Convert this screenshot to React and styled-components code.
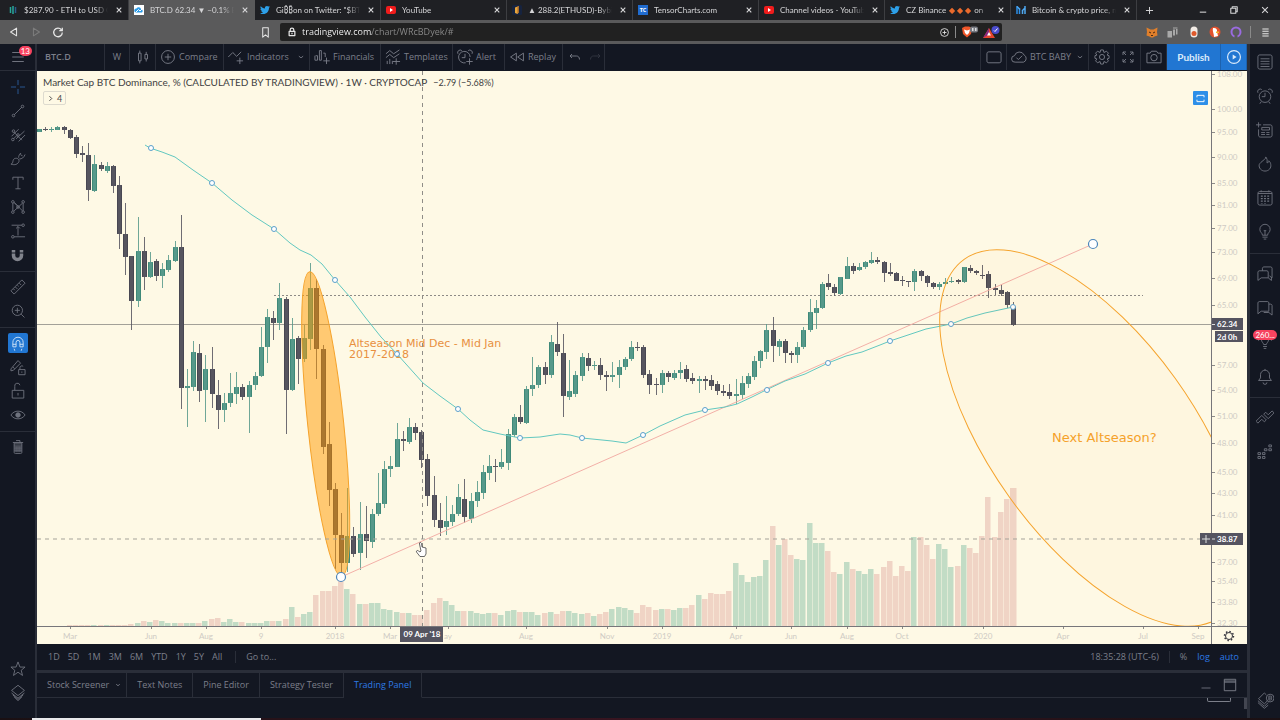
import React, { useState } from "react";
import styled, { createGlobalStyle, css } from "styled-components";
import { FaTwitter } from "react-icons/fa";

const COLORS = {
  panel: "#131722",
  line: "#2a2e39",
  icon: "#6f737e",
  text: "#7c7f8a",
  blue: "#2176d2",
  link: "#2d7ae5",
  paper: "#fef9e5",
  up: "#56998a",
  down: "#56555f",
  orange: "#f5a32c",
};

const GlobalStyle = createGlobalStyle`
  * { box-sizing: border-box; }
  body { margin: 0; background: ${COLORS.panel}; font-family: "Open Sans", "Noto Sans", sans-serif; }
  button, input { font-family: inherit; }
  button { border: 0; padding: 0; background: none; color: inherit; cursor: pointer; }
  svg { flex: none; }
`;

const Page = styled.div`
  min-height: 100vh;
  display: flex;
  flex-direction: column;
  overflow: hidden;
`;

/* browser chrome */
const TabStrip = styled.div`
  display: flex;
  height: 20px;
  padding-left: 3px;
  background: #1f2024;
  color: #d6d6d8;
`;
const BrowserTab = styled.div`
  flex: 0 1 126px;
  min-width: 0;
  display: flex;
  align-items: center;
  gap: 6px;
  padding: 0 4px 0 5px;
  background: ${({ $active }) => ($active ? "#5a5a5b" : "transparent")};
  border-right: 1px solid ${({ $active }) => ($active ? "#5a5a5b" : "#3d3e42")};
`;
const TabTitle = styled.span`
  flex: 1;
  min-width: 0;
  white-space: nowrap;
  font-family: Lato, "Noto Sans", sans-serif;
  font-size: 8px;
  line-height: 12px;
  mask-image: linear-gradient(to right, #000 85%, transparent);
`;
const Diamond = styled.span`
  margin: 0 1px;
  color: #ea6a2c;
`;
const ChromeButton = styled.button`
  display: flex;
  align-items: center;
  justify-content: center;
  width: ${({ $w }) => $w || 10}px;
  flex: none;
`;
const DimButton = styled(ChromeButton)`
  color: #7d7d7d;
`;
const FadedButton = styled(ChromeButton)`
  color: #343843;
`;
const Spacer = styled.div`
  flex: 1;
`;
const AddressRow = styled.div`
  display: flex;
  align-items: center;
  height: 24px;
  background: #5a5a5b;
  color: #e6e6e6;
`;
const AddressNav = styled.div`
  display: flex;
  gap: 2px;
  padding-left: 4px;
  width: 255px;
`;
const AddressField = styled.label`
  flex: 1;
  display: flex;
  align-items: center;
  gap: 5px;
  height: 18px;
  margin-left: 5px;
  padding: 0 2px 0 7px;
  border-radius: 2px;
  background: #212121;
`;
const AddressInput = styled.input`
  flex: 1;
  min-width: 0;
  padding: 0;
  border: 0;
  outline: 0;
  font-size: 9px;
  line-height: 14px;
  color: #e6e6e6;
  background: linear-gradient(to right, #fff 70px, #8c8c8c 70px);
  background-clip: text;
  -webkit-text-fill-color: transparent;
`;
const Extensions = styled.div`
  display: flex;
  align-items: center;
  padding-left: 139px;
  padding-right: 4px;
`;
const VRule = styled.span`
  flex: none;
  width: 1px;
  height: ${({ $h }) => $h || 12}px;
  margin: 0 ${({ $gap }) => $gap || 0}px;
  background: ${({ $color }) => $color || COLORS.line};
`;

/* trading app */
const Workspace = styled.div`
  flex: 1;
  display: flex;
  background: ${COLORS.panel};
  color: ${COLORS.text};
`;
const SideBar = styled.nav`
  flex: none;
  display: flex;
  flex-direction: column;
  align-items: center;
  color: ${COLORS.icon};
`;
const LeftBar = styled(SideBar)`
  width: 37px;
  border-right: 2px solid ${COLORS.line};
  padding-bottom: 13px;
`;
const RightBar = styled(SideBar)`
  width: 33px;
  border-left: 3px solid ${COLORS.line};
  padding: 1px 0 1px;
`;
const MenuButton = styled.button`
  position: relative;
  width: 35px;
  height: 27px;
  margin-bottom: 4px;
  border-bottom: 1px solid ${COLORS.line};
  display: flex;
  align-items: center;
  justify-content: center;
`;
const ToolButton = styled.button`
  position: relative;
  display: flex;
  align-items: center;
  justify-content: center;
  width: 20px;
  height: ${({ $h }) => $h || 24}px;
  color: ${({ $color }) => $color || "inherit"};
  ${({ $on }) =>
    $on &&
    css`
      height: 20px;
      margin: 2px 0;
      border-radius: 2px;
      background: ${COLORS.blue};
      color: #d5e6f8;
    `}
`;
const HRule = styled.span`
  flex: none;
  width: 100%;
  height: 1px;
  margin: 4px 0 3px;
  background: ${COLORS.line};
`;
const Badge = styled.span`
  position: absolute;
  top: ${({ $top }) => $top}px;
  right: ${({ $right }) => $right}px;
  padding: 0 2px;
  border-radius: 6px;
  background: #f7435f;
  color: #fff;
  font-family: Lato, sans-serif;
  font-size: 8px;
  line-height: 10px;
`;
const Main = styled.main`
  flex: 1;
  min-width: 0;
  display: flex;
  flex-direction: column;
`;
const Toolbar = styled.header`
  display: flex;
  height: 26px;
  margin-bottom: 1px;
`;
const Segment = styled.button`
  flex: none;
  display: flex;
  align-items: center;
  justify-content: ${({ $center }) => ($center ? "center" : "flex-start")};
  gap: 2px;
  width: ${({ $w }) => $w}px;
  padding-left: ${({ $center }) => ($center ? 0 : 3)}px;
  border-right: 1px solid ${COLORS.line};
  font-size: 9px;
  line-height: 14px;
  white-space: nowrap;
`;
const SymbolButton = styled(Segment)`
  padding-left: 8px;
  font-weight: 600;
`;
const Undo = styled.div`
  display: flex;
  border-right: 1px solid ${COLORS.line};
`;
const PublishButton = styled.button`
  width: ${({ $w }) => $w}px;
  display: flex;
  align-items: center;
  justify-content: center;
  background: ${COLORS.blue};
  border-right: 1px solid #1d62ae;
  color: #dcebfa;
  font-family: Lato, sans-serif;
  font-size: 10px;
  font-weight: bold;
`;
const ChevronBox = styled.span`
  margin-left: auto;
  padding-right: 2px;
  display: flex;
`;

const ChartPane = styled.section`
  position: relative;
  background: ${COLORS.paper};
`;
const ChartSvg = styled.svg`
  display: block;
  width: 100%;
  height: auto;
  font-family: Lato, sans-serif;
  font-size: 8px;
`;
const Legend = styled.div`
  position: absolute;
  top: 4px;
  left: 6px;
  color: #3f3f42;
  font-family: Lato, sans-serif;
  font-size: 10px;
  line-height: 14px;
  white-space: nowrap;
`;
const Change = styled.span`
  margin-left: 6px;
  font-size: 9px;
`;
const CollapseButton = styled.button`
  display: flex;
  align-items: center;
  gap: 3px;
  height: 14px;
  margin-top: 1px;
  padding: 0 3px;
  border: 1px solid #dedbcf;
  border-radius: 2px;
  color: #4a4a4c;
  font-size: 9px;
`;
const FitButton = styled.button`
  position: absolute;
  top: 20px;
  right: 39px;
  width: 15px;
  height: 14px;
  display: flex;
  align-items: center;
  justify-content: center;
  border-radius: 1px;
  background: #2d8fe8;
  color: #fff;
`;
const BottomBar = styled.div`
  display: flex;
  align-items: center;
  gap: 10px;
  height: 26px;
  padding: 0 8px 0 11px;
`;
const RangeGroup = styled.div`
  display: flex;
  gap: 8px;
  padding-right: 3px;
`;
const TextButton = styled.button`
  font-size: 9px;
  line-height: 14px;
  color: ${({ $on }) => ($on ? COLORS.link : "inherit")};
`;
const PanelTabs = styled.div`
  display: flex;
  height: 28px;
  border-top: 3px solid ${COLORS.line};
`;
const PanelTab = styled.button`
  display: flex;
  align-items: center;
  gap: 4px;
  padding: 0 ${({ $menu }) => ($menu ? 3 : 10)}px 0 10px;
  border-right: 1px solid ${COLORS.line};
  border-bottom: 1px solid ${({ $on }) => ($on ? "transparent" : COLORS.line)};
  color: ${({ $on }) => ($on ? COLORS.link : "inherit")};
  font-size: 9px;
  line-height: 14px;
`;
const PanelActions = styled.div`
  flex: 1;
  display: flex;
  align-items: center;
  justify-content: flex-end;
  gap: 6px;
  padding-right: 8px;
  border-bottom: 1px solid ${COLORS.line};
`;
const PanelBody = styled.div`
  display: flex;
  justify-content: flex-end;
  gap: 13px;
  height: 20px;
`;
const PeekButton = styled.span`
  width: 24px;
  height: 4px;
  border: 1px solid ${COLORS.text};
  border-top: 0;
  border-radius: 0 0 2px 2px;
`;
const PeekScroll = styled.span`
  width: 3px;
  height: 11px;
  background: #434651;
`;
const TaskStrip = styled.footer`
  height: 2px;
  padding-left: 32px;
  background: linear-gradient(to right, #1a1013 0%, #3c1522 55%, #1a1013 100%);
`;
const TaskActive = styled.div`
  width: 229px;
  height: 2px;
  background: #e9e9ec;
`;

/* 28-unit line icons */
const ICONS = {
  menu: "M5 7H23M5 14H23M5 21H23",
  cross: "M14 3V11M14 17V25M3 14H11M17 14H25",
  trend: "M8 20L20 8M5 21a2 2 0 1 0 4 0a2 2 0 1 0-4 0M19 7a2 2 0 1 0 4 0a2 2 0 1 0-4 0",
  fork: "M4 16L15 5M11 20L24 8M15 24L25 14M7 9L20 22M4 21a2 2 0 1 0 4 0a2 2 0 1 0-4 0M12 14a2 2 0 1 0 4 0a2 2 0 1 0-4 0M5 8a2 2 0 1 0 4 0a2 2 0 1 0-4 0M7 20L12 15",
  brush: "M3 22c5-1 1-8 7-9c4-1 7 3 5 6c-3 5-9 4-12 3zM15 12c0-3 1-5 3-7M16 14c4 0 7-2 9-7M18 5c0 3 1 4 3 4",
  text: "M6 9V5H22V9M14 5V23M10 23H18",
  pattern:
    "M6 8V20M8 7L21 20M8 20L21 8M22 8V20M8 7L13 12M4 6a2 2 0 1 0 4 0a2 2 0 1 0-4 0M4 22a2 2 0 1 0 4 0a2 2 0 1 0-4 0M20 6a2 2 0 1 0 4 0a2 2 0 1 0-4 0M20 22a2 2 0 1 0 4 0a2 2 0 1 0-4 0M12 14a2 2 0 1 0 4 0a2 2 0 1 0-4 0",
  position: "M4 5H20M14 7V21M11 10L14 7L17 10M8 23H25M20 5a2 2 0 1 0 4 0a2 2 0 1 0-4 0M4 23a2 2 0 1 0 4 0a2 2 0 1 0-4 0",
  ruler: "M3 20L20 3L25 8L8 25zM7 17L9 19M10 14L13 17M13 11L15 13M16 8L19 11",
  zoom: "M5 13a8 8 0 1 0 16 0a8 8 0 1 0-16 0M19 19L24 24M13 9V17M9 13H17",
  magnet: "M6 20V13a8 8 0 0 1 16 0V20H17V13a3 3 0 0 0-6 0V20zM6 16H11M17 16H22M8 23L9 26M20 23L19 26",
  pencilLock: "M3 17L14 4L18 8L7 19L3 20zM6 14L9 17M15 18H25V26H15zM17 18V15a3 3 0 0 1 5-2M20 21V23",
  lock: "M5 13H23V25H5zM9 13V7a4 4 0 0 1 8-2M14 17V21",
  trash: "M8 8H20V22c0 2-1 2-2 2H10c-1 0-2 0-2-2zM6 7H22M11 4H17V7M8 11H20M11 13V22M14 13V22M17 13V22M8 14H20M8 17H20M8 20H20",
  star: "M14 3L17 11H25L19 16L21 24L14 19L7 24L9 16L3 11H11z",
  layers: "M14 2L24 10L14 18L4 10zM4 14L14 22L24 14M6 17L14 24L22 17M8 20L14 26L20 20",
  candles: "M7 8H11V20H7zM9 4V8M9 20V24M17 10H21V17H17zM19 6V10M19 17V21",
  compare: "M4 14a10 10 0 1 0 20 0a10 10 0 1 0-20 0M14 9V19M9 14H19",
  indicators: "M2 14L9 7L15 13L22 6M20 15V25M15 20H25",
  financials: "M3 12V19M7 12V19M4 12H7M10 4H13V19H10zM16 8H19V14M21 15V25M16 20H26M3 19H7",
  templates: "M3 9L9 4L15 9L24 3M3 15L9 10L15 15L24 9M5 20V25M9 17V25M13 20V25M19 16V26M14 21H25",
  alarm: "M15 23A9 9 0 1 1 22 14M3 9A4 4 0 0 1 9 4M19 4A4 4 0 0 1 25 9M14 9V15H9M21 16V26M16 21H26",
  replay: "M13 8V20L4 14zM24 8V20L15 14z",
  undo: "M8 8L4 12L8 16M4 12H17c3 0 6 2 6 7",
  redo: "M20 8L24 12L20 16M24 12H11c-3 0-6 2-6 7",
  square: "M6 6H22c2 0 3 1 3 3V20c0 2-1 3-3 3H6c-2 0-3-1-3-3V9c0-2 1-3 3-3z",
  cloud: "M8 22a5 5 0 0 1-1-10a8 8 0 0 1 15-1a6 6 0 0 1-1 11zM10 15L13 18L19 12",
  gear: "M14 10a4 4 0 1 0 0 8a4 4 0 1 0 0-8M12 3H16L17 7L21 5L24 8L22 11L25 12V16L22 17L24 20L21 23L17 21L16 25H12L11 21L7 23L4 20L6 17L3 16V12L6 11L4 8L7 5L11 7z",
  full: "M4 10V4H10M4 4L10 10M18 4H24V10M24 4L18 10M4 18V24H10M4 24L10 18M24 18V24H18M24 24L18 18",
  camera: "M3 8H8L10 5H18L20 8H25V23H3zM9 15a5 5 0 1 0 10 0a5 5 0 1 0-10 0",
  play: "M4 14a10 10 0 1 0 20 0a10 10 0 1 0-20 0",
  list: "M6 3H22c2 0 3 1 3 3V22c0 2-1 3-3 3H6c-2 0-3-1-3-3V6c0-2 1-3 3-3zM7 9H21M7 13H21M7 17H21M7 21H21",
  clock: "M5 15a9 9 0 1 0 18 0a9 9 0 1 0-18 0M3 9A4 4 0 0 1 9 4M19 4A4 4 0 0 1 25 9M14 9V15H9M8 23L6 26M20 23L22 26",
  news: "M11 6H22c2 0 3 1 3 3V22c0 2-1 3-3 3H7c-2 0-3-1-3-3V13M9 10H21V14H9zM8 18H14M8 21H14M16 18H21M16 21H21M4 2V10M0 6H8",
  fire: "M15 3c1 4-8 7-10 12c-1 5 3 10 9 10s10-5 9-10c0-3-2-5-3-6c0 2-1 3-3 3c1-4 0-7-2-9z",
  calendar: "M6 4H22c2 0 3 1 3 3V22c0 2-1 3-3 3H6c-2 0-3-1-3-3V7c0-2 1-3 3-3zM8 2V5M20 2V5M3 7H25",
  calendarDots: "M9 10V23M14 10V23M19 10V20",
  bulb: "M10 19c0-4-4-4-4-9a8 8 0 0 1 16 0c0 5-4 5-4 9zM10 22H18M12 25H16M14 19V12M12 12H16",
  chats: "M10 9V5c0-1 1-2 2-2H23c1 0 2 1 2 2V20L21 17M3 11c0-1 1-2 2-2H17c1 0 2 1 2 2V20H8L3 24zM19 20L24 24V19",
  chat: "M5 4H18c1 0 2 1 2 2V19H8L3 23V6c0-1 1-2 2-2zM20 8H23c1 0 2 1 2 2V25L20 21H12",
  idea: "M9 6c-2 8 2 8 3 12H16c1-4 5-4 3-12M11 21H17M12 24H16M4 8V12M1 5V9M24 8V12M27 5V9",
  bell: "M4 21H24L21 17V12a7 7 0 0 0-14 0V17zM14 5V3M11 24a3 3 0 0 0 6 0",
  zig: "M0 19L9 10L16 17L13 20L9 16L3 22zM12 8L19 15L28 6L25 3L19 9L15 5z",
  dots: "M3 15H7V18H3zM3 21H7V24H3zM10 15H14V18H10zM10 21H14V24H10zM13 9H17V12H13zM20 3H24V6H20zM20 9H24V12H20z",
  stackB: "M13 3L4 12L13 20L18 15M3 15L13 24L19 18M3 18L13 27L19 22M13 3L16 6M16 11a6 6 0 1 0 12 0a6 6 0 1 0-12 0M20 8V14H23c2 0 2-3 0-3c2 0 2-3 0-3zM20 11H23",
  eye: "M3 14c5-8 17-8 22 0c-5 8-17 8-22 0z",
  window: "M4 4H24V24H4zM4 9H24M4 7H24",
  minus: "M5 20H23",
  chevron: "M9 12L14 16L19 12",
  right: "M10 5L19 14L10 23",
  close: "M6 6L22 22M22 6L6 22",
  plus: "M14 3V25M3 14H25",
  fit: "M5 11V6H23V11M5 17V22H23V17",
  restore: "M5 9H19V23H5zM9 9V5H23V19H19",
  back: "M20 5V23L6 14z",
  forward: "M8 5V23L22 14z",
  reload: "M22 9A10 10 0 1 0 24 15M24 4V11H17",
  bookmark: "M8 4H20V24L14 19L8 24z",
  menuSmall: "M6 5H22M6 11H22M6 17H22M6 23H22",
  padlock: "M6 12H22V24H6zM9 12V8a5 5 0 0 1 10 0V12M14 16V20",
};

const Icon = ({ name, size = 18, weight = 1.4, children }) => (
  <svg
    width={size}
    height={size}
    viewBox="0 0 28 28"
    fill="none"
    stroke="currentColor"
    strokeWidth={weight}
    strokeLinejoin="round"
    aria-hidden="true"
  >
    <path d={ICONS[name]} />
    {children}
  </svg>
);

const Favicon = ({ kind }) => {
  if (kind === "twitter") return <FaTwitter size={10} color="#2d9fe8" />;
  return (
    <svg width="10" height="10" viewBox="0 0 20 20" aria-hidden="true">
      {kind === "eth" && (
        <g strokeWidth="3">
          <path d="M5 4V16M10 2V18" stroke="#27a79a" />
          <path d="M15 4V16" stroke="#2b5d8c" />
        </g>
      )}
      {kind === "tv" && (
        <g>
          <rect width="20" height="20" fill="#fff" />
          <path d="M4 15a4 4 0 0 1 1-8a5 5 0 0 1 9 1a4 4 0 0 1 2 7z" fill="#2e9be6" />
          <path d="M4 14L9 9L12 12L16 8" stroke="#fff" strokeWidth="2" fill="none" />
        </g>
      )}
      {kind === "youtube" && (
        <g>
          <rect y="2" width="20" height="16" rx="4" fill="#f01c1c" />
          <path d="M8 6V14L14 10z" fill="#fff" />
        </g>
      )}
      {kind === "bybit" && (
        <g>
          <rect width="20" height="20" rx="3" fill="#16233f" />
          <path d="M6 5L14 2V14L11 18L6 16z" fill="#e8a63c" />
          <path d="M11 3L14 2V14L11 18z" fill="#a8692a" />
        </g>
      )}
      {kind === "tensor" && (
        <g>
          <rect width="20" height="20" fill="#1f6bd0" />
          <text x="10" y="14" fill="#fff" fontSize="11" fontWeight="bold" textAnchor="middle">
            TC
          </text>
        </g>
      )}
      {kind === "market" && (
        <g strokeWidth="3" fill="none">
          <path d="M2 2V18M7 7V18" stroke="#2d8fe8" />
          <path d="M13 11V18M18 2V18M2 3L8 9M12 12L18 6" stroke="#4fa8f0" />
        </g>
      )}
    </svg>
  );
};

const BROWSER_TABS = [
  ["eth", "$287.90 - ETH to USD Co"],
  ["tv", "BTC.D 62.34 ▼ −0.1% BT"],
  ["twitter", 'Gi₿₿on on Twitter: "$BTC'],
  ["youtube", "YouTube"],
  ["bybit", "▲ 288.2(ETHUSD)-Bybit"],
  ["tensor", "TensorCharts.com"],
  ["youtube", "Channel videos - YouTub"],
  ["twitter", "CZ Binance ◆◆◆ on"],
  ["market", "Bitcoin & crypto price, m"],
];

// dir, high, body top, body bottom, low, volume
const CANDLES = [
  [1, 129, 129, 132, 132, 0], [0, 127, 129, 130, 131, 0], [1, 127, 129, 130, 132, 0], [1, 126, 127, 130, 130, 0],
  [0, 126, 127, 130, 134, 0], [0, 129, 130, 138, 139, 1], [0, 135, 137, 154, 158, 1], [0, 146, 153, 155, 162, 1],
  [0, 143, 155, 190, 201, 1], [1, 155, 164, 191, 192, 1], [0, 162, 165, 169, 171, 1], [1, 162, 166, 171, 173, 1],
  [0, 165, 166, 186, 193, 1], [0, 176, 185, 234, 249, 1], [0, 203, 234, 257, 275, 1], [0, 256, 256, 301, 330, 2],
  [1, 217, 251, 301, 307, 3], [0, 237, 251, 277, 290, 5], [1, 252, 262, 277, 278, 4], [0, 259, 261, 276, 281, 6],
  [1, 263, 269, 276, 288, 5], [1, 255, 260, 270, 272, 3], [1, 241, 247, 261, 262, 3], [0, 215, 247, 388, 409, 3],
  [1, 369, 386, 388, 427, 3], [1, 341, 352, 387, 391, 3], [0, 344, 353, 391, 402, 3], [1, 355, 369, 390, 422, 5],
  [0, 347, 369, 394, 408, 7], [0, 380, 395, 410, 429, 8], [1, 393, 403, 410, 422, 4], [1, 373, 393, 403, 407, 7],
  [1, 372, 387, 394, 404, 4], [0, 384, 387, 397, 400, 4], [1, 381, 385, 397, 433, 3], [1, 372, 376, 385, 390, 3],
  [1, 327, 347, 376, 377, 3], [1, 309, 317, 347, 363, 5], [0, 311, 318, 323, 340, 5], [1, 283, 298, 323, 330, 5],
  [0, 297, 299, 390, 434, 7], [1, 318, 339, 390, 391, 19], [0, 336, 338, 359, 384, 9], [1, 325, 338, 359, 362, 12],
  [1, 263, 288, 339, 350, 14], [0, 279, 288, 349, 379, 31], [0, 345, 349, 447, 454, 35], [0, 422, 444, 490, 506, 35],
  [0, 483, 489, 535, 569, 40], [0, 513, 535, 563, 573, 45], [1, 488, 536, 563, 572, 37], [0, 527, 536, 554, 557, 32],
  [1, 502, 534, 553, 570, 22], [0, 506, 534, 541, 558, 22], [1, 509, 514, 542, 548, 23], [1, 473, 503, 514, 516, 23],
  [1, 461, 469, 504, 508, 17], [1, 456, 466, 469, 477, 16], [1, 423, 439, 467, 467, 14], [0, 431, 439, 441, 451, 13],
  [1, 418, 427, 442, 444, 13], [0, 423, 427, 433, 440, 11], [0, 430, 432, 460, 468, 11], [0, 454, 459, 496, 506, 16],
  [0, 476, 495, 520, 527, 23], [0, 503, 520, 528, 536, 28], [1, 496, 521, 527, 535, 25], [1, 505, 514, 522, 526, 21],
  [1, 484, 497, 514, 516, 15], [0, 479, 499, 517, 523, 15], [1, 493, 501, 519, 523, 15], [1, 481, 492, 501, 507, 13],
  [1, 465, 472, 493, 499, 12], [1, 455, 466, 473, 480, 13], [0, 459, 466, 467, 482, 13], [1, 449, 462, 467, 469, 11],
  [1, 429, 434, 463, 470, 15], [1, 414, 417, 435, 437, 16], [0, 405, 417, 422, 424, 14], [1, 386, 389, 423, 424, 14],
  [1, 357, 385, 389, 396, 14], [1, 365, 367, 385, 388, 11], [0, 362, 367, 375, 384, 13], [1, 335, 342, 375, 378, 14],
  [0, 322, 344, 352, 356, 12], [0, 334, 353, 396, 417, 15], [1, 360, 391, 397, 400, 15], [1, 371, 375, 394, 397, 13],
  [1, 353, 357, 376, 381, 12], [0, 353, 358, 366, 371, 13], [1, 361, 365, 366, 370, 10], [0, 358, 365, 375, 380, 12],
  [0, 371, 375, 377, 391, 14], [1, 362, 375, 377, 382, 17], [1, 360, 367, 375, 388, 19], [1, 357, 359, 367, 370, 18],
  [1, 341, 347, 359, 361, 16], [0, 342, 347, 348, 351, 13], [0, 345, 347, 375, 378, 21], [0, 370, 374, 385, 394, 19],
  [0, 378, 384, 385, 395, 16], [1, 370, 373, 385, 393, 17], [0, 371, 373, 377, 382, 17], [1, 370, 373, 378, 380, 16],
  [1, 362, 370, 373, 379, 18], [0, 365, 369, 379, 382, 18], [0, 373, 378, 381, 384, 21], [1, 376, 379, 381, 393, 31],
  [0, 376, 379, 381, 390, 27], [0, 375, 380, 386, 390, 33], [0, 381, 384, 391, 395, 32], [0, 385, 391, 393, 396, 32],
  [0, 384, 392, 396, 399, 35], [1, 379, 394, 396, 404, 63], [1, 376, 383, 395, 399, 51], [1, 373, 376, 384, 388, 44],
  [1, 356, 361, 377, 380, 49], [1, 350, 351, 361, 368, 50], [1, 324, 330, 352, 359, 66], [0, 317, 330, 346, 362, 100],
  [1, 339, 341, 347, 356, 81], [0, 339, 341, 353, 363, 87], [0, 351, 353, 355, 363, 71], [1, 342, 347, 355, 363, 67],
  [1, 327, 330, 347, 349, 66], [1, 299, 312, 330, 332, 103], [1, 300, 308, 313, 329, 83], [1, 282, 284, 308, 309, 83],
  [0, 274, 283, 287, 290, 75], [0, 284, 287, 293, 296, 54], [1, 277, 277, 294, 295, 52], [1, 257, 266, 279, 279, 64],
  [0, 263, 266, 271, 274, 57], [1, 263, 267, 270, 271, 55], [1, 261, 262, 267, 269, 52], [1, 252, 260, 263, 264, 57],
  [0, 257, 260, 262, 264, 52], [0, 261, 262, 273, 282, 59], [0, 263, 272, 274, 276, 65], [0, 272, 273, 281, 281, 50],
  [0, 276, 280, 281, 286, 60], [0, 281, 281, 282, 287, 55], [1, 269, 271, 282, 291, 89], [0, 270, 271, 276, 281, 89],
  [0, 275, 276, 283, 287, 81], [0, 282, 283, 287, 289, 67], [1, 282, 284, 287, 290, 82], [1, 278, 282, 284, 285, 77],
  [1, 277, 281, 282, 283, 59], [0, 279, 280, 282, 284, 60], [1, 267, 267, 282, 283, 81], [0, 265, 268, 271, 273, 78],
  [0, 270, 271, 273, 275, 73], [0, 265, 275, 276, 279, 90], [0, 271, 274, 288, 298, 129], [0, 284, 288, 290, 295, 89],
  [0, 284, 290, 294, 296, 114], [0, 291, 292, 305, 308, 127], [0, 302, 307, 325, 326, 138],
];

const AVERAGE =
  "145,145 150,148 162,152 175,157 193,170 212,183 232,200 252,215 274,229 290,243 300,250 311,255 322,264 335,280 350,297 365,317 381,337 397,354 423,383 440,396 458,409 470,420 483,430 500,434 520,438 540,437 560,434 570,435 582,438 612,441 626,443 643,435 660,426 685,415 705,410 725,407 737,404 752,397 766,390 785,381 805,374 828,363 846,356 862,352 880,345 890,341 926,329 951,324 967,318 985,313 1013,307";
const HANDLES = [
  [151, 148], [212, 183], [274, 229], [335, 280], [397, 354], [458, 409], [520, 438], [582, 438],
  [643, 435], [705, 410], [767, 390], [828, 363], [890, 341], [951, 324], [1013, 307],
];

const PRICES = [
  ["108.00", 74], ["100.00", 109], ["95.00", 132], ["90.00", 157], ["85.00", 183], ["81.00", 205], ["77.00", 228],
  ["73.00", 252], ["69.00", 278], ["65.00", 305], ["57.00", 365], ["54.00", 390], ["51.00", 416], ["48.00", 443],
  ["45.00", 472], ["43.00", 493], ["41.00", 515], ["37.00", 562], ["35.40", 581], ["33.80", 602], ["32.30", 623],
];
const DATES = [
  ["Mar", 70], ["Jun", 151], ["Aug", 206], ["9", 261], ["2018", 335], ["Mar", 390], ["ay", 448], ["Aug", 526],
  ["Nov", 607], ["2019", 662], ["Apr", 736], ["Jun", 791], ["Aug", 847], ["Oct", 902], ["2020", 983], ["Apr", 1063],
  ["Jul", 1143], ["Sep", 1198],
];

const candleX = (i) => Math.round(39 + i * 6.165);

function Chart() {
  return (
    <ChartSvg viewBox="37 71 1210 573" role="img" aria-label="BTC dominance weekly chart">
      <defs>
        <clipPath id="plot">
          <rect x="37" y="71" width="1174" height="556" />
        </clipPath>
      </defs>
      <g clipPath="url(#plot)">
        {CANDLES.map(([up, , , , , volume], i) => (
          <rect
            key={i}
            x={candleX(i) - 3}
            y={626 - volume}
            width={i === CANDLES.length - 1 ? 6.5 : 5.5}
            height={volume}
            fill={up ? "#c2dcc5" : "#f0d4c5"}
          />
        ))}
        <path d="M37 324.5H1211" stroke="#a3a198" />
        <path d="M274 295.500H1143" stroke="#8d8a86" strokeDasharray="2 2" />
        {CANDLES.map(([up, high, top, bottom, low], i) => (
          <g key={i} fill={up ? COLORS.up : COLORS.down}>
            <rect x={candleX(i)} y={high} width="1" height={low - high} opacity="0.85" />
            <rect x={candleX(i) - 2} y={top} width="5" height={Math.max(1, bottom - top)} />
            <path
              d={`M${candleX(i) - 1.5} ${top + 0.5}V${Math.max(top + 1, bottom - 0.5)}M${candleX(i) + 2.5} ${top + 0.5}V${Math.max(top + 1, bottom - 0.5)}`}
              stroke={up ? "#2f7d6c" : "#3f3e4a"}
              strokeWidth="0.6"
            />
          </g>
        ))}
        <g fill="#e8903f" fontFamily="DejaVu Sans, sans-serif" fontSize="11">
          <text x="349" y="347">Altseason Mid Dec - Mid Jan</text>
          <text x="349" y="358">2017-2018</text>
        </g>
        <text x="1052" y="442" fill={COLORS.orange} fontFamily="DejaVu Sans, sans-serif" fontSize="13">
          Next Altseason?
        </text>
        <path d="M341 577L1093 244" stroke="#f3b0a8" />
        <polyline points={AVERAGE} fill="none" stroke="#62c8c0" />
        <g fill="#fff" stroke="#5b9fcb">
          {HANDLES.map(([x, y]) => (
            <circle key={x} cx={x} cy={y} r="2.5" />
          ))}
        </g>
        <g stroke={COLORS.orange}>
          <ellipse rx="153" ry="18" transform="translate(325.700 424) rotate(84)" fill="#f90" fillOpacity="0.5" />
          <ellipse rx="220" ry="102" transform="translate(1092.500 438) rotate(54.300)" fill="#f80" fillOpacity="0.025" />
        </g>
        <g fill="#fff" stroke="#4c86bb" strokeWidth="1.2">
          <circle cx="341" cy="577" r="4.5" />
          <circle cx="1093" cy="244" r="4.5" />
        </g>
        <path d="M37 539H1200" stroke="#a5a39a" strokeDasharray="4 4" />
        <path d="M422.500 71V627" stroke="#8f8d87" strokeDasharray="4 4" />
      </g>

      <path d="M37 626.500H1247M1211.500 71V644" stroke="#77767a" fill="none" />
      <g fill="#cfcbc4">
        {PRICES.map(([label, y]) => (
          <g key={label}>
            <path d={`M1212 ${y + 0.5}h3`} stroke="#8d8b88" />
            <text x="1217" y={y + 3}>{label}</text>
          </g>
        ))}
        {DATES.map(([label, x]) => (
          <g key={x}>
            <path d={`M${x + 0.5} 627v2`} stroke="#8d8b88" />
            <text x={x} y="639" textAnchor="middle">{label}</text>
          </g>
        ))}
      </g>
      <g fill="#555460">
        <rect x="1212" y="318" width="31" height="12" />
        <rect x="1215" y="331" width="28" height="11" />
        <rect x="1200" y="533" width="43" height="12" />
        <rect x="400" y="627" width="43" height="15" />
      </g>
      <path d="M1202 539H1210M1206 535V543M1212 324.500h3M1212 539h3" stroke="#dedede" />
      <g fill="#fff" fontWeight="bold">
        <text x="1217" y="327">62.34</text>
        <text x="1217" y="340">2d 0h</text>
        <text x="1217" y="542">38.87</text>
        <text x="422" y="637" textAnchor="middle">09 Apr '18</text>
      </g>
      <g transform="translate(1229 636)" stroke="#33333c" fill="none">
        <circle r="3.500" />
        <circle r="4.500" strokeDasharray="1.500 2" strokeWidth="1.500" />
      </g>
      <path
        d="M421 551L419.500 544C419 542 421 542 421.500 543.500L422 547L426 548V554L424.500 556.500H420L416.500 552C416 550.500 417.500 550 418.500 551L420 552z"
        fill="#fff"
        stroke="#444"
        strokeWidth="0.8"
      />
    </ChartSvg>
  );
}

const tabLabel = (title) =>
  title.split("").map((char, i) => (char === "◆" ? <Diamond key={i}>{char}</Diamond> : char));

function Browser() {
  const [url, setUrl] = useState("tradingview.com/chart/WRcBDyek/#");

  return (
    <>
      <TabStrip>
        {BROWSER_TABS.map(([kind, title], i) => (
          <BrowserTab key={title} $active={i === 1}>
            <Favicon kind={kind} />
            <TabTitle>{title.includes("◆") ? tabLabel(title) : title}</TabTitle>
            <ChromeButton aria-label="Close tab">
              <Icon name="close" size={8} weight={4} />
            </ChromeButton>
          </BrowserTab>
        ))}
        <ChromeButton $w={24} aria-label="New tab"><Icon name="plus" size={9} weight={3} /></ChromeButton>
        <Spacer />
        <ChromeButton $w={30} aria-label="Minimise"><Icon name="minus" size={10} weight={3} /></ChromeButton>
        <ChromeButton $w={31} aria-label="Restore"><Icon name="restore" size={10} weight={3} /></ChromeButton>
        <ChromeButton $w={31} aria-label="Close"><Icon name="close" size={10} weight={3} /></ChromeButton>
      </TabStrip>
      <AddressRow>
        <AddressNav>
          <ChromeButton $w={20} aria-label="Back"><Icon name="back" size={12} weight={2.4} /></ChromeButton>
          <DimButton $w={20} aria-label="Forward"><Icon name="forward" size={12} weight={2.4} /></DimButton>
          <ChromeButton $w={20} aria-label="Reload"><Icon name="reload" size={12} weight={3} /></ChromeButton>
        </AddressNav>
        <ChromeButton $w={20} aria-label="Bookmark"><Icon name="bookmark" size={13} weight={2.2} /></ChromeButton>
        <AddressField>
          <Icon name="padlock" size={10} weight={3.5} />
          <AddressInput aria-label="Address" value={url} onChange={(e) => setUrl(e.target.value)} />
          <ChromeButton $w={12} aria-label="Zoom"><Icon name="compare" size={11} weight={2.2} /></ChromeButton>
          <VRule $color="#8a8a8a" />
          <svg width="17" height="12" viewBox="0 0 34 24" aria-hidden="true">
            <path d="M2 4L8 1H16L22 4L20 16L12 23L4 16z" fill="#f0572a" />
            <path d="M6 7L12 9L18 7L16 14L12 18L8 14z" fill="#fff" />
            <rect x="18" y="1" width="16" height="12" rx="4" fill="#777a82" />
            <path d="M22 4H25V10H22zM28 4H31V10H28z" fill="#ddd" />
          </svg>
          <svg width="17" height="13" viewBox="0 0 34 26" aria-hidden="true">
            <path d="M12 4L24 24H0z" fill="#e8452c" />
            <path d="M12 4L0 24L12 17z" fill="#8b2a80" />
            <path d="M12 12L16 19H8z" fill="#fff" />
            <circle cx="25" cy="8" r="8" fill="#4b4ccd" />
            <path d="M22 9L24 11L29 5" stroke="#fff" strokeWidth="2" fill="none" />
          </svg>
        </AddressField>
        <Extensions>
          <ChromeButton $w={21} aria-label="Wallet">
            <svg width="12" height="12" viewBox="0 0 24 24">
              <path d="M1 3L9 7H15L23 3L22 12L23 19L17 21L14 23H10L7 21L1 19L2 12z" fill="#e07f2b" />
              <path d="M6 12L10 14M18 12L14 14M10 19H14" stroke="#4a2a14" strokeWidth="2" />
            </svg>
          </ChromeButton>
          <ChromeButton $w={21} aria-label="Tabs">
            <svg width="11" height="11" viewBox="0 0 22 22" fill="#a9a9a9">
              <path d="M1 8H10V21H1zM12 5H16V17H12zM12 1H21V3H12zM18 4H21V15H18z" />
            </svg>
          </ChromeButton>
          <ChromeButton $w={21} aria-label="Egg">
            <svg width="10" height="12" viewBox="0 0 20 24">
              <rect x="3" y="1" width="14" height="22" rx="7" fill="#f2ece6" />
              <circle cx="10" cy="15" r="5" fill="#e0592b" />
            </svg>
          </ChromeButton>
          <ChromeButton $w={21} aria-label="Search shield">
            <svg width="12" height="12" viewBox="0 0 24 24">
              <circle cx="12" cy="12" r="11" fill="#e2502c" />
              <path d="M8 4C14 3 17 7 16 11L18 20L10 22C10 15 6 9 8 4z" fill="#fff" />
              <path d="M14 11H20V14H14z" fill="#f5b62c" />
            </svg>
          </ChromeButton>
          <ChromeButton $w={21} aria-label="Octo">
            <svg width="12" height="12" viewBox="0 0 24 24">
              <circle cx="12" cy="12" r="9" fill="none" stroke="#9a6be0" strokeWidth="4" />
              <path d="M9 18H15V24H9z" fill="#5a5a5b" />
            </svg>
          </ChromeButton>
          <VRule $gap={4} $color="#8a8a8a" />
          <ChromeButton $w={21} aria-label="Browser menu"><Icon name="menuSmall" size={11} weight={2.6} /></ChromeButton>
        </Extensions>
      </AddressRow>
    </>
  );
}

const Tool = ({ name, label, children, ...rest }) => (
  <ToolButton aria-label={label} {...rest}>
    <Icon name={name}>{children}</Icon>
  </ToolButton>
);

function DrawingTools() {
  return (
    <LeftBar>
      <MenuButton aria-label="Menu">
        <Icon name="menu" weight={1.8} />
        <Badge $top={2} $right={3}>13</Badge>
      </MenuButton>
      <Tool name="cross" label="Cross" $color="#2b5f9e" />
      <Tool name="trend" label="Trend line" />
      <Tool name="fork" label="Pitchfork" />
      <Tool name="brush" label="Brush" />
      <Tool name="text" label="Text" />
      <Tool name="pattern" label="Pattern" />
      <Tool name="position" label="Position" />
      <ToolButton aria-label="Strong magnet">
        <svg width="13" height="13" viewBox="0 0 26 26" fill="none" stroke="#80838c" strokeWidth="7">
          <path d="M5 9V13a8 8 0 0 0 16 0V9" />
          <path d="M5 2V7M21 2V7" />
        </svg>
      </ToolButton>
      <HRule />
      <Tool name="ruler" label="Measure" />
      <Tool name="zoom" label="Zoom in" />
      <HRule />
      <Tool name="magnet" label="Magnet mode" $on />
      <Tool name="pencilLock" label="Stay in drawing mode" />
      <Tool name="lock" label="Lock drawings" />
      <Tool name="eye" label="Hide drawings">
        <circle cx="14" cy="14" r="3.5" fill="currentColor" />
      </Tool>
      <HRule />
      <Tool name="trash" label="Remove drawings" />
      <Spacer />
      <Tool name="star" label="Favourites" />
      <Tool name="layers" label="Object tree" />
    </LeftBar>
  );
}

function Widgets() {
  return (
    <RightBar>
      <Tool name="list" label="Watchlist" $h={34} />
      <Tool name="clock" label="Alerts" $h={34} />
      <Tool name="news" label="News" $h={34} />
      <Tool name="fire" label="Hotlists" $h={34} />
      <Tool name="calendar" label="Calendar" $h={34}>
        <path d={ICONS.calendarDots} strokeWidth="3" strokeDasharray="2 2" />
      </Tool>
      <Tool name="bulb" label="My ideas" $h={34} />
      <HRule />
      <Tool name="chats" label="Public chats" $h={34} />
      <Tool name="chat" label="Private chats" $h={34} />
      <ToolButton aria-label="Ideas stream" $h={34}>
        <Icon name="idea" />
        <Badge $top={5} $right={-2}>260...</Badge>
      </ToolButton>
      <Tool name="bell" label="Notifications" $h={34} />
      <HRule />
      <Tool name="zig" label="Order panel" $h={34} />
      <Tool name="dots" label="Depth" $h={34} />
      <Spacer />
      <Tool name="stackB" label="Object tree beta" $h={34} />
    </RightBar>
  );
}

function TopToolbar() {
  return (
    <Toolbar>
      <SymbolButton $w={68}>BTC.D</SymbolButton>
      <Segment $w={25} $center>W</Segment>
      <Segment $w={26} $center aria-label="Chart type"><Icon name="candles" /></Segment>
      <Segment $w={68}><Icon name="compare" />Compare</Segment>
      <Segment $w={86}>
        <Icon name="indicators" />Indicators
        <ChevronBox><Icon name="chevron" size={12} weight={2} /></ChevronBox>
      </Segment>
      <Segment $w={71}><Icon name="financials" />Financials</Segment>
      <Segment $w={72}><Icon name="templates" />Templates</Segment>
      <Segment $w={52}><Icon name="alarm" />Alert</Segment>
      <Segment $w={58}><Icon name="replay" />Replay</Segment>
      <Undo>
        <ChromeButton $w={23} aria-label="Undo"><Icon name="undo" size={14} weight={1.8} /></ChromeButton>
        <FadedButton $w={18} aria-label="Redo"><Icon name="redo" size={14} weight={1.8} /></FadedButton>
      </Undo>
      <Spacer />
      <VRule $h={26} />
      <Segment $w={26} $center aria-label="Layout"><Icon name="square" /></Segment>
      <Segment $w={82}>
        <Icon name="cloud" />BTC BABY
        <ChevronBox><Icon name="chevron" size={12} weight={2} /></ChevronBox>
      </Segment>
      <Segment $w={26} $center aria-label="Settings"><Icon name="gear" /></Segment>
      <Segment $w={26} $center aria-label="Fullscreen"><Icon name="full" size={14} weight={1.8} /></Segment>
      <Segment $w={26} $center aria-label="Snapshot"><Icon name="camera" /></Segment>
      <PublishButton $w={54}>Publish</PublishButton>
      <PublishButton $w={26} aria-label="Start stream">
        <Icon name="play" weight={1.8}><path d="M12 10V18L18 14z" fill="currentColor" stroke="none" /></Icon>
      </PublishButton>
    </Toolbar>
  );
}

const RANGES = ["1D", "5D", "1M", "3M", "6M", "YTD", "1Y", "5Y", "All"];
const PANELS = ["Stock Screener", "Text Notes", "Pine Editor", "Strategy Tester", "Trading Panel"];

export default function App() {
  const [panel, setPanel] = useState("Trading Panel");

  return (
    <Page>
      <GlobalStyle />
      <Browser />
      <Workspace>
        <DrawingTools />
        <Main>
          <TopToolbar />
          <ChartPane>
            <Chart />
            <Legend>
              Market Cap BTC Dominance, % (CALCULATED BY TRADINGVIEW) · 1W · CRYPTOCAP
              <Change>−2.79 (−5.68%)</Change>
              <CollapseButton>
                <Icon name="right" size={7} weight={4} />4
              </CollapseButton>
            </Legend>
            <FitButton aria-label="Fit"><Icon name="fit" size={11} weight={2.4} /></FitButton>
          </ChartPane>
          <BottomBar>
            <RangeGroup>
              {RANGES.map((range) => (
                <TextButton key={range}>{range}</TextButton>
              ))}
            </RangeGroup>
            <VRule />
            <TextButton>Go to...</TextButton>
            <Spacer />
            <TextButton>18:35:28 (UTC-6)</TextButton>
            <VRule />
            <TextButton>%</TextButton>
            <TextButton $on>log</TextButton>
            <TextButton $on>auto</TextButton>
          </BottomBar>
          <PanelTabs>
            {PANELS.map((name, i) => (
              <PanelTab key={name} $menu={i === 0} $on={name === panel} onClick={() => setPanel(name)}>
                {name}
                {i === 0 && <Icon name="chevron" size={10} weight={2.4} />}
              </PanelTab>
            ))}
            <PanelActions>
              <ChromeButton $w={18} aria-label="Collapse"><Icon name="minus" size={14} weight={1.6} /></ChromeButton>
              <ChromeButton $w={18} aria-label="Maximise"><Icon name="window" size={16} weight={1.6} /></ChromeButton>
            </PanelActions>
          </PanelTabs>
          <PanelBody>
            <PeekButton />
            <PeekScroll />
          </PanelBody>
        </Main>
        <Widgets />
      </Workspace>
      <TaskStrip>
        <TaskActive />
      </TaskStrip>
    </Page>
  );
}
